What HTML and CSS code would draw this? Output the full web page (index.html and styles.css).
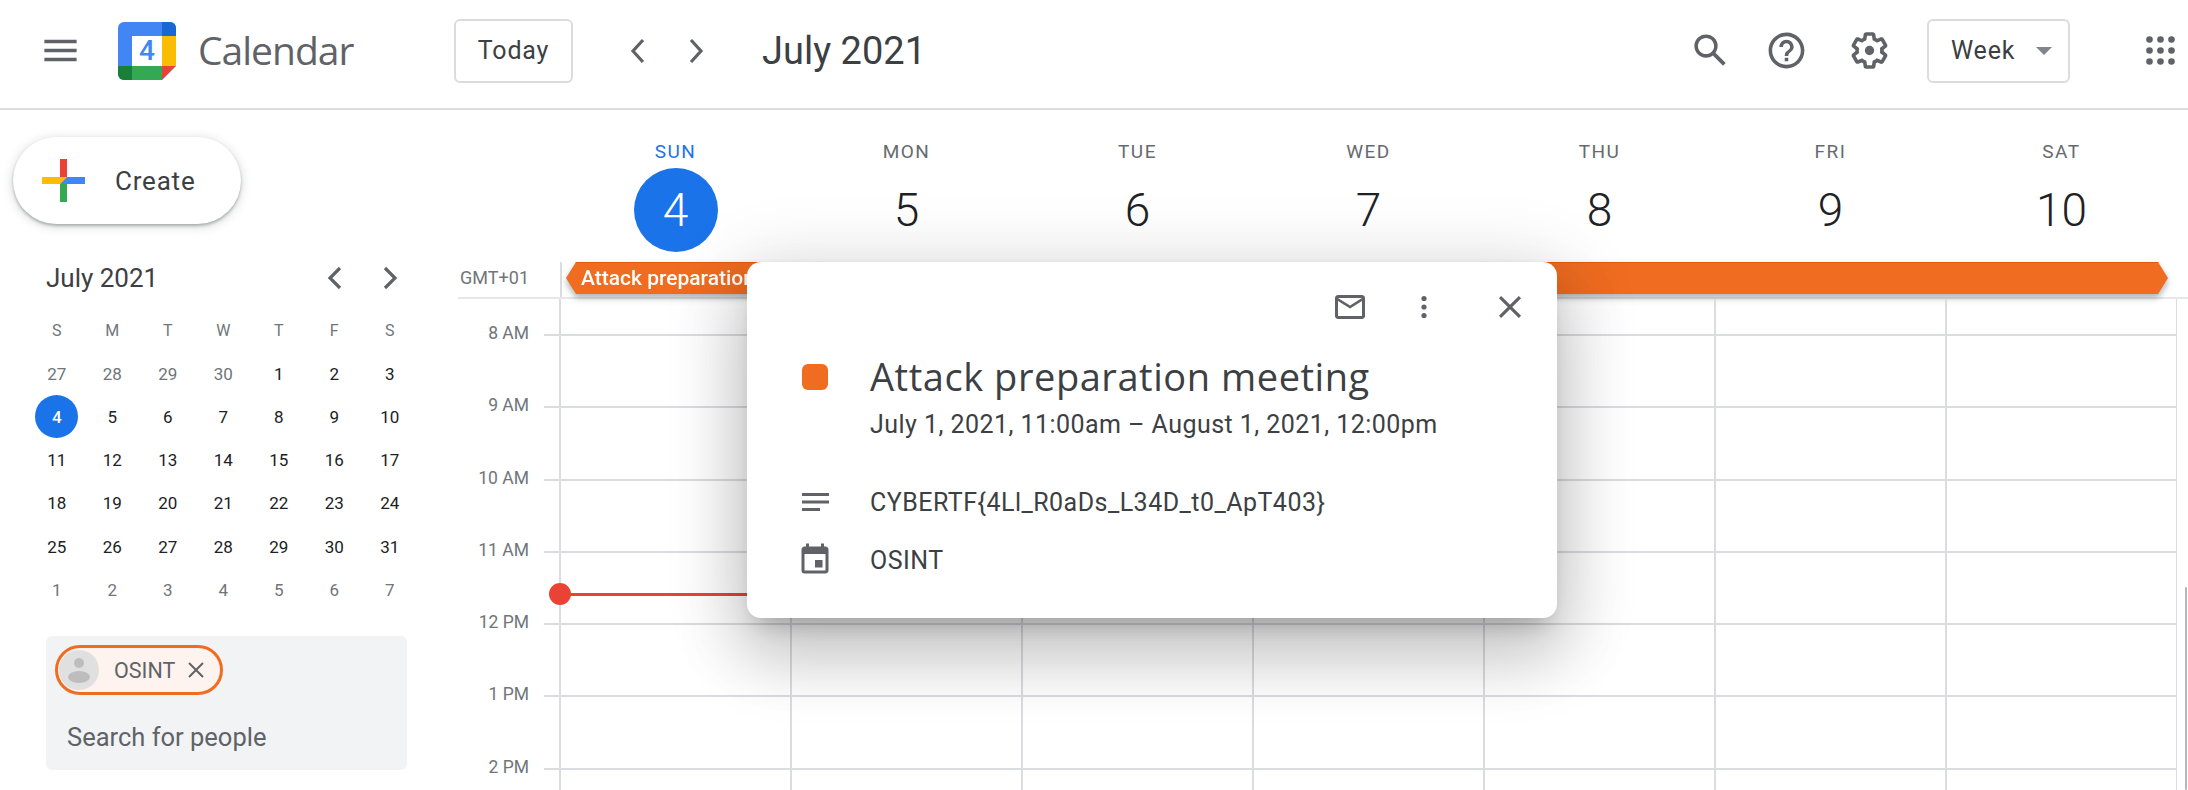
FILE: index.html
```html
<!DOCTYPE html>
<html lang="en">
<head>
<meta charset="utf-8">
<title>Calendar</title>
<link rel="stylesheet" href="styles.css">
</head>
<body>
<div class="page">
  <header class="topbar">
    <svg class="ic menu" viewBox="0 0 24 24"><path d="M3 18h18v-2H3v2zm0-5h18v-2H3v2zm0-7v2h18V6H3z"/></svg>
    <svg class="logo" viewBox="0 0 58 58">
      <defs><clipPath id="lc"><path d="M6 0H52a6 6 0 0 1 6 6V44L44 58H6a6 6 0 0 1-6-6V6a6 6 0 0 1 6-6z"/></clipPath></defs>
      <g clip-path="url(#lc)">
        <rect width="58" height="58" fill="#4285f4"/>
        <rect x="44" width="14" height="14" fill="#1967d2"/>
        <rect x="44" y="14" width="14" height="30" fill="#fbbc04"/>
        <rect y="44" width="14" height="14" fill="#188038"/>
        <rect x="14" y="44" width="30" height="14" fill="#34a853"/>
        <path d="M44 44H58L44 58z" fill="#ea4335"/>
        <rect x="14" y="14" width="30" height="30" fill="#fff"/>
      </g>
      <text x="29" y="38" class="logo-num">4</text>
    </svg>
    <span class="brand">Calendar</span>
    <button class="btn today">Today</button>
    <svg class="chev nav-prev" viewBox="0 0 20 30"><path d="M15 4L5 15l10 11"/></svg>
    <svg class="chev nav-next" viewBox="0 0 20 30"><path d="M5 4l10 11L5 26"/></svg>
    <span class="range">July 2021</span>
    <span class="spacer"></span>
    <svg class="ic search" viewBox="0 0 24 24"><path d="M20.49 19l-5.73-5.73C15.53 12.2 16 10.91 16 9.5A6.5 6.5 0 1 0 9.5 16c1.41 0 2.7-.47 3.77-1.24L19 20.49 20.49 19zM5 9.5C5 7.01 7.01 5 9.5 5S14 7.01 14 9.5 11.99 14 9.5 14 5 11.99 5 9.5z"/></svg>
    <svg class="ic help" viewBox="0 0 24 24"><path d="M11 18h2v-2h-2v2zm1-16C6.48 2 2 6.48 2 12s4.48 10 10 10 10-4.48 10-10S17.52 2 12 2zm0 18c-4.41 0-8-3.59-8-8s3.59-8 8-8 8 3.59 8 8-3.59 8-8 8zm0-14c-2.21 0-4 1.79-4 4h2c0-1.1.9-2 2-2s2 .9 2 2c0 2-3 1.75-3 5h2c0-2.25 3-2.5 3-5 0-2.21-1.79-4-4-4z"/></svg>
    <svg class="ic gear" viewBox="0 0 24 24"><path d="M13.85 22.25h-3.7c-.74 0-1.36-.54-1.45-1.27l-.27-1.89c-.27-.14-.53-.29-.79-.46l-1.8.72c-.7.26-1.47-.03-1.81-.65L2.2 15.53c-.35-.66-.2-1.44.36-1.88l1.53-1.19c-.01-.15-.02-.3-.02-.46 0-.15.01-.31.02-.46l-1.52-1.19c-.59-.45-.74-1.26-.37-1.88l1.85-3.19c.34-.62 1.11-.9 1.79-.63l1.81.73c.26-.17.52-.32.78-.46l.27-1.91c.09-.7.71-1.25 1.44-1.25h3.7c.74 0 1.36.54 1.45 1.27l.27 1.89c.27.14.53.29.79.46l1.8-.72c.71-.26 1.48.03 1.82.65l1.84 3.18c.36.66.2 1.44-.36 1.88l-1.52 1.19c.01.15.02.3.02.46s-.01.31-.02.46l1.52 1.19c.56.45.72 1.23.37 1.86l-1.86 3.22c-.34.62-1.11.9-1.8.63l-1.8-.72c-.26.17-.52.32-.78.46l-.27 1.91c-.1.68-.72 1.22-1.46 1.22zm-3.23-2h2.76l.37-2.55.53-.22c.44-.18.88-.44 1.34-.78l.45-.34 2.38.96 1.38-2.4-2.03-1.58.07-.56c.03-.26.06-.51.06-.78s-.03-.53-.06-.78l-.07-.56 2.03-1.58-1.39-2.4-2.39.96-.45-.35c-.42-.32-.87-.58-1.33-.77l-.52-.22-.37-2.55h-2.76l-.37 2.55-.53.21c-.44.19-.88.44-1.34.79l-.45.33-2.38-.95-1.39 2.39 2.03 1.58-.07.56a7 7 0 0 0-.06.79c0 .26.02.53.06.78l.07.56-2.03 1.58 1.38 2.4 2.39-.96.45.35c.43.33.86.58 1.33.77l.53.22.38 2.55z"/><circle cx="12" cy="12" r="2.6"/></svg>
    <button class="btn view"><span>Week</span><i class="caret"></i></button>
    <svg class="ic apps" viewBox="0 0 29 29"><circle cx="3.5" cy="3.5" r="3.3"/><circle cx="14.5" cy="3.5" r="3.3"/><circle cx="25.5" cy="3.5" r="3.3"/><circle cx="3.5" cy="14.5" r="3.3"/><circle cx="14.5" cy="14.5" r="3.3"/><circle cx="25.5" cy="14.5" r="3.3"/><circle cx="3.5" cy="25.5" r="3.3"/><circle cx="14.5" cy="25.5" r="3.3"/><circle cx="25.5" cy="25.5" r="3.3"/></svg>
  </header>

  <div class="content">
    <aside class="sidebar">
      <button class="create">
        <svg class="plus" viewBox="0 0 43 43">
          <path d="M18 0h7v18l-7 7z" fill="#ea4335"/>
          <path d="M25 18h18v7H18z" fill="#4285f4"/>
          <path d="M18 25h7v18h-7z" fill="#34a853"/>
          <path d="M0 18h25l-7 7H0z" fill="#fbbc04"/>
        </svg>
        <span>Create</span>
      </button>
      <div class="mini-head">
        <span class="mini-title">July 2021</span>
        <svg class="chev mini-prev" viewBox="0 0 20 30"><path d="M15 5L5 15l10 10"/></svg>
        <svg class="chev mini-next" viewBox="0 0 20 30"><path d="M5 5l10 10L5 25"/></svg>
      </div>
      <div class="mini-grid">
        <span class="dow">S</span><span class="dow">M</span><span class="dow">T</span><span class="dow">W</span><span class="dow">T</span><span class="dow">F</span><span class="dow">S</span>
        <span class="off">27</span><span class="off">28</span><span class="off">29</span><span class="off">30</span><span>1</span><span>2</span><span>3</span>
        <span class="sel">4</span><span>5</span><span>6</span><span>7</span><span>8</span><span>9</span><span>10</span>
        <span>11</span><span>12</span><span>13</span><span>14</span><span>15</span><span>16</span><span>17</span>
        <span>18</span><span>19</span><span>20</span><span>21</span><span>22</span><span>23</span><span>24</span>
        <span>25</span><span>26</span><span>27</span><span>28</span><span>29</span><span>30</span><span>31</span>
        <span class="off">1</span><span class="off">2</span><span class="off">3</span><span class="off">4</span><span class="off">5</span><span class="off">6</span><span class="off">7</span>
      </div>
      <div class="people">
        <div class="chip">
          <svg class="avatar" viewBox="0 0 40 40"><circle cx="20" cy="20" r="20" fill="#e0e0e0"/><circle cx="20" cy="13" r="5" fill="#bdbdbd"/><ellipse cx="20" cy="27" rx="11" ry="6" fill="#bdbdbd"/></svg>
          <span class="chip-name">OSINT</span>
          <svg class="chip-x" viewBox="0 0 16 16"><path d="M1 1l14 14M15 1L1 15"/></svg>
        </div>
        <div class="people-search">Search for people</div>
      </div>
    </aside>

    <main class="main">
      <div class="days">
        <div class="gutter"></div>
        <div class="day today-col"><span class="dname">SUN</span><span class="dnum">4</span></div>
        <div class="day"><span class="dname">MON</span><span class="dnum">5</span></div>
        <div class="day"><span class="dname">TUE</span><span class="dnum">6</span></div>
        <div class="day"><span class="dname">WED</span><span class="dnum">7</span></div>
        <div class="day"><span class="dname">THU</span><span class="dnum">8</span></div>
        <div class="day"><span class="dname">FRI</span><span class="dnum">9</span></div>
        <div class="day"><span class="dname">SAT</span><span class="dnum">10</span></div>
      </div>
      <div class="allday">
        <div class="tz">GMT+01</div>
        <div class="allday-track">
          <div class="event-wrap"><div class="event">Attack preparation meeting</div></div>
        </div>
      </div>
      <div class="hours">
        <div class="hour lead"><div class="hour-line"></div></div>
        <div class="hour"><span class="hour-label">8 AM</span><div class="hour-line"></div></div>
        <div class="hour"><span class="hour-label">9 AM</span><div class="hour-line"></div></div>
        <div class="hour"><span class="hour-label">10 AM</span><div class="hour-line"></div></div>
        <div class="hour"><span class="hour-label">11 AM</span><div class="hour-line"></div></div>
        <div class="hour"><span class="hour-label">12 PM</span><div class="hour-line"></div></div>
        <div class="hour"><span class="hour-label">1 PM</span><div class="hour-line"></div></div>
        <div class="hour"><span class="hour-label">2 PM</span><div class="hour-line"></div></div>
        <div class="now"><i class="now-dot"></i><i class="now-line"></i></div>
      </div>
    </main>
  </div>

  <section class="popup">
    <div class="pop-actions">
      <svg class="ic pop-mail" viewBox="0 0 24 24"><path d="M20 4H4c-1.1 0-2 .9-2 2v12c0 1.1.9 2 2 2h16c1.1 0 2-.9 2-2V6c0-1.1-.9-2-2-2zm0 14H4V8l8 5 8-5v10zm-8-7L4 6h16l-8 5z"/></svg>
      <svg class="ic pop-more" viewBox="0 0 8 24"><circle cx="4" cy="3.5" r="2.6"/><circle cx="4" cy="12" r="2.6"/><circle cx="4" cy="20.5" r="2.6"/></svg>
      <svg class="ic pop-close" viewBox="0 0 24 24"><path d="M19 6.41L17.59 5 12 10.59 6.41 5 5 6.41 10.59 12 5 17.59 6.41 19 12 13.41 17.59 19 19 17.59 13.41 12z"/></svg>
    </div>
    <div class="pop-row pop-title-row">
      <span class="pop-slot"><i class="swatch"></i></span>
      <div>
        <div class="pop-title">Attack preparation meeting</div>
        <div class="pop-date">July 1, 2021, 11:00am – August 1, 2021, 12:00pm</div>
      </div>
    </div>
    <div class="pop-row pop-desc">
      <span class="pop-slot"><svg class="ic pop-notes" viewBox="0 0 27 18"><path d="M0 0h27v3H0zM0 7.500h27v3H0zM0 15h18v3H0z"/></svg></span>
      <span class="pop-text">CYBERTF{4Ll_R0aDs_L34D_t0_ApT403}</span>
    </div>
    <div class="pop-row pop-cal">
      <span class="pop-slot"><svg class="ic pop-event" viewBox="0 0 24 24"><path d="M17 12h-5v5h5v-5zM16 1v2H8V1H6v2H5c-1.11 0-1.99.9-1.99 2L3 19a2 2 0 0 0 2 2h14c1.1 0 2-.9 2-2V5c0-1.1-.9-2-2-2h-1V1h-2zm3 18H5V8h14v11z"/></svg></span>
      <span class="pop-text">OSINT</span>
    </div>
  </section>

  <div class="scrollbar"></div>
</div>
</body>
</html>
```
FILE: styles.css
```css
* { box-sizing: border-box; }
html, body { margin: 0; padding: 0; background: #fff; }
body { font-family: Roboto, "Liberation Sans", sans-serif; color: #3c4043; }
.page { position: relative; width: 2188px; height: 790px; overflow: hidden; }
button { font-family: inherit; background: #fff; cursor: pointer; }
.ic { display: block; fill: #5f6368; flex: none; }
.chev { display: block; fill: none; stroke: #5f6368; stroke-width: 3.2; flex: none; }

/* top bar */
.topbar { display: flex; align-items: center; height: 110px; padding-bottom: 7px; border-bottom: 2px solid #dadce0; }
.menu { width: 43px; height: 43px; margin-left: 39px; }
.logo { width: 58px; height: 58px; margin-left: 36px; flex: none; }
.logo-num { font: 500 28px Roboto, sans-serif; fill: #4285f4; text-anchor: middle; }
.brand { margin-left: 22px; width: 256px; padding-bottom: 2px; font-family: "Open Sans", sans-serif; font-size: 39px; color: #5f6368; letter-spacing: -1px; flex: none; }
.btn { height: 64px; border: 2px solid #dadce0; border-radius: 6px; font-size: 25px; font-weight: 400; letter-spacing: .8px; color: #3c4043; padding: 0; }
.today { width: 119px; flex: none; }
.nav-prev { width: 20px; height: 30px; margin-left: 55px; }
.nav-next { width: 20px; height: 30px; margin-left: 38px; }
.range { margin-left: 56px; font-size: 38px; color: #3c4043; }
.spacer { flex: 1; }
.search { width: 43px; height: 43px; margin-right: 33px; }
.help { width: 43px; height: 43px; margin-right: 40px; }
.gear { width: 43px; height: 43px; margin-right: 36px; }
.view { width: 143px; display: flex; align-items: center; padding-left: 22px; flex: none; }
.caret { margin-left: 21px; border-left: 8px solid transparent; border-right: 8px solid transparent; border-top: 8px solid #80868b; }
.apps { width: 29px; height: 29px; margin-left: 76px; margin-right: 13px; }

/* sidebar */
.content { display: flex; }
.sidebar { width: 440px; flex: none; padding-left: 13px; }
.create { display: flex; align-items: center; width: 228px; height: 87px; margin-top: 27px; padding: 0 0 0 29px; border: 0; border-radius: 44px; box-shadow: 0 2px 3px rgba(60,64,67,.35), 0 2px 10px 2px rgba(60,64,67,.15); font-size: 26px; font-weight: 400; letter-spacing: .8px; color: #3c4043; }
.plus { width: 43px; height: 43px; margin-right: 30px; flex: none; }
.mini-head { display: flex; align-items: center; height: 40px; margin-top: 34px; padding-left: 33px; }
.mini-title { font-size: 26px; font-weight: 400; color: #3c4043; width: 279px; }
.mini-prev { width: 20px; height: 30px; }
.mini-next { width: 20px; height: 30px; margin-left: 35px; }
.mini-grid { display: grid; grid-template-columns: repeat(7, 55.5px); grid-auto-rows: 43.200px; margin: 11px 0 0 16px; font-size: 17px; font-weight: 400; color: #202124; }
.mini-grid span { display: flex; align-items: center; justify-content: center; }
.mini-grid .dow { color: #70757a; font-size: 16px; }
.mini-grid .off { color: #70757a; }
.mini-grid .sel { width: 43px; height: 43px; justify-self: center; border-radius: 50%; background: #1a73e8; color: #fff; font-weight: 500; }
.people { width: 361px; height: 134px; margin: 25px 0 0 33px; padding: 9px; background: #f1f3f4; border-radius: 6px; }
.chip { display: flex; align-items: center; width: 168px; height: 50px; padding-left: 1px; border: 3px solid #ef6c20; border-radius: 25px; background: #fef3ee; }
.avatar { width: 40px; height: 40px; flex: none; }
.chip-name { margin-left: 15px; font-size: 21.500px; font-weight: 400; color: #5f6368; }
.chip-x { width: 16px; height: 16px; margin-left: 13px; fill: none; stroke: #5f6368; stroke-width: 2; flex: none; }
.people-search { margin: 27px 0 0 12px; font-size: 25.500px; color: #5f6368; }

/* week */
.main { flex: 1; min-width: 0; }
.days { display: grid; grid-template-columns: 120px repeat(7, 231px); height: 152px; }
.day { display: flex; flex-direction: column; align-items: center; padding-top: 30px; }
.dname { height: 24px; line-height: 24px; font-size: 19px; font-weight: 400; letter-spacing: 1.5px; color: #666a70; }
.dnum { display: flex; align-items: center; justify-content: center; width: 84px; height: 84px; margin-top: 4px; border-radius: 50%; font-size: 46px; font-weight: 300; color: #202124; }
.today-col .dname { color: #1a73e8; }
.today-col .dnum { background: #1a73e8; color: #fff; }

.allday { display: flex; height: 37px; margin-left: 18px; border-bottom: 2px solid #e6e7ea; }
.tz { width: 71px; height: 32px; line-height: 32px; font-size: 18px; text-align: right; color: #70757a; flex: none; }
.allday-track { margin-left: 31px; border-left: 2px solid #dadce0; padding-left: 4px; flex: none; }
.event-wrap { filter: drop-shadow(0 4px 3px rgba(60,64,67,.4)); }
.event { width: 1602px; height: 32px; line-height: 31px; padding-left: 15px; background: #ef6c20; border-top: 1.500px solid #e8590c; color: #fff; font-size: 21px; font-weight: 500; clip-path: polygon(10px 0, calc(100% - 10px) 0, 100% 50%, calc(100% - 10px) 100%, 10px 100%, 0 50%); }

.hours { position: relative; }
.hour { display: flex; height: 72.300px; }
.hour.lead { height: 35px; }
.hour-label { width: 89px; height: 24px; line-height: 24px; margin-top: -13px; font-size: 17.500px; text-align: right; color: #70757a; flex: none; }
.hour-line { width: 1633px; margin-left: 15px; border-top: 2px solid #dadce0; background-image: linear-gradient(90deg, #dadce0 2px, transparent 2px); background-size: 231px 100%; background-position: 15px 0; background-repeat: repeat-x; flex: none; }
.hour.lead .hour-line { margin-left: 104px; border-top: 0; }

.now { position: absolute; left: 109px; top: 284px; display: flex; align-items: center; }
.now-dot { width: 22px; height: 22px; border-radius: 50%; background: #ea4335; flex: none; }
.now-line { width: 220px; height: 3px; background: #ea4335; margin-left: -1px; }

/* popup */
.popup { position: absolute; left: 747px; top: 262px; width: 810px; height: 356px; background: #fff; border-radius: 14px; box-shadow: 0 38px 66px 6px rgba(0,0,0,.15), 0 14px 75px 14px rgba(0,0,0,.12), 0 16px 22px -10px rgba(0,0,0,.2); }
.pop-actions { display: flex; align-items: center; justify-content: flex-end; height: 89px; padding-right: 28px; }
.pop-mail { width: 36px; height: 36px; }
.pop-more { width: 8px; height: 24px; margin-left: 52px; }
.pop-close { width: 38px; height: 38px; margin-left: 63px; }
.pop-row { display: flex; align-items: center; }
.pop-slot { display: flex; align-items: center; justify-content: center; width: 123px; flex: none; }
.pop-title-row { align-items: flex-start; margin-top: 5px; }
.pop-title-row .pop-slot { height: 42px; }
.swatch { display: block; width: 26px; height: 26px; border-radius: 6px; background: #ef6c20; margin-left: 13px; }
.pop-notes { width: 27px; height: 18px; margin-left: 13px; }
.pop-event { width: 36px; height: 36px; margin-left: 13px; }
.pop-title { height: 40px; line-height: 40px; font-family: "Open Sans", sans-serif; font-size: 38px; letter-spacing: .55px; color: #3c4043; white-space: nowrap; }
.pop-date { height: 30px; line-height: 30px; margin-top: 14px; font-size: 25px; letter-spacing: .45px; color: #3c4043; white-space: nowrap; }
.pop-desc { margin-top: 42px; height: 40px; }
.pop-cal { margin-top: 18px; height: 40px; }
.pop-text { font-size: 25px; letter-spacing: .47px; color: #3c4043; }

.scrollbar { position: absolute; right: 1px; top: 587px; bottom: 0; width: 2px; background: #b4b5b9; border-radius: 1px; }
```
